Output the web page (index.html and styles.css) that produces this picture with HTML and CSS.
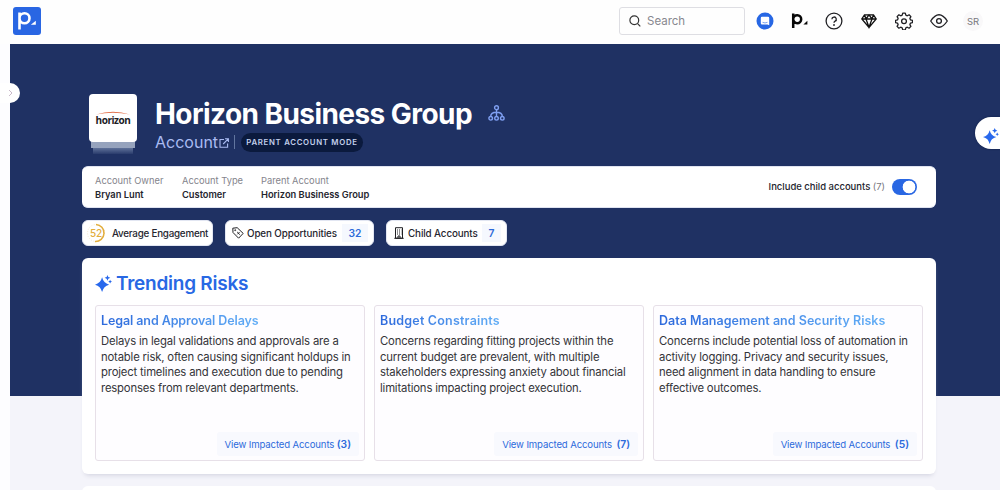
FILE: index.html
```html
<!DOCTYPE html>
<html lang="en">
<head>
<meta charset="utf-8">
<title>Horizon Business Group</title>
<link rel="stylesheet" href="styles.css">
</head>
<body>
<svg class="defs" width="0" height="0">
  <symbol id="sparkle" viewBox="0 0 18 18"><path d="M7.500 2.500 Q9 8.800 15 10.200 Q9 11.600 7.500 18 Q6 11.600 0 10.200 Q6 8.800 7.500 2.500Z M13.200 0l.9 2.100 2.100.9-2.100.9-.9 2.100-.9-2.100-2.100-.9 2.100-.9Z M16 5l.7 1.400 1.300.6-1.300.6-.7 1.400-.7-1.400-1.300-.6 1.300-.6Z"/></symbol>
</svg>
<header class="topbar">
  <div class="logo"><svg width="28" height="28" viewBox="0 0 28 28"><path class="p-white" d="M6.500 22.500V5.500M6.500 11.200a5 5 0 1 1 5 5a5 5 0 0 1-5-5"/><path fill="#fff" d="M17.800 17.800l5-4v4z"/></svg></div>
  <div class="tools">
    <div class="search"><svg width="12" height="12" viewBox="0 0 12 12"><circle cx="5.300" cy="5.300" r="4.400"/><path d="M8.600 8.600l2.700 2.700"/></svg><span>Search</span></div>
    <svg class="i-chat" width="18" height="18" viewBox="0 0 18 18"><circle cx="9" cy="9" r="8.500" fill="#2767e4"/><path fill="#fff" d="M6 4.700h6a1.200 1.200 0 0 1 1.200 1.200v7.300l-1.700-.7H6a1.200 1.200 0 0 1-1.200-1.200V5.900a1.200 1.200 0 0 1 1.200-1.200z"/><path d="M6.500 10.300q2.500 1.300 5 0" fill="none" stroke="#2767e4" stroke-width=".6"/></svg>
    <svg class="i-p" width="18" height="18" viewBox="0 0 18 18"><path fill="none" stroke="#080808" stroke-width="2.500" d="M2.200 16V1.500M2.200 7a4 4 0 1 1 4 4.200a4 4 0 0 1-4-4.200"/><path fill="#080808" d="M12.400 12.500l4-3.700v3.700z"/></svg>
    <svg class="line i-help" width="18" height="18" viewBox="0 0 18 18"><circle cx="9" cy="9" r="7.900"/><path d="M6.900 7.200a2.200 2.200 0 1 1 3.200 2c-.8.400-1.100.8-1.100 1.500"/><circle cx="9" cy="12.900" r=".35"/></svg>
    <svg class="i-gem" width="16" height="16" viewBox="0 0 16 16"><path d="M3.500 1.800h9L15.200 6 8 14.500.8 6zM1 6h14M3.500 1.800L5 6l3-4.200L11 6l1.500-4.200M5 6l3 8.300L11 6"/></svg>
    <svg class="line i-gear" width="18" height="18" viewBox="0 0 18 18"><path d="M7.700 1.200h2.600l.5 2 1.500.6 1.800-1 1.800 1.800-1 1.800.6 1.500 2 .5v2.200l-2 .5-.6 1.500 1 1.800-1.800 1.800-1.800-1-1.500.6-.5 2H7.700l-.5-2-1.500-.6-1.800 1-1.800-1.800 1-1.800-.6-1.500-2-.5V8.400l2-.5.6-1.500-1-1.800 1.800-1.800 1.800 1 1.500-.6z" stroke-linejoin="round"/><circle cx="9" cy="9.300" r="2.400"/></svg>
    <svg class="line i-eye" width="18" height="18" viewBox="0 0 18 18"><path d="M.7 9Q9-3.500 17.300 9Q9 21.500.7 9z" stroke-linejoin="round"/><circle cx="9" cy="9" r="2.400"/></svg>
    <span class="avatar">SR</span>
  </div>
</header>
<main class="stage">
  <button class="expander"><svg width="5" height="8" viewBox="0 0 5 8"><path d="M1 1l3 3-3 3"/></svg></button>
  <button class="assistant"><svg width="16" height="16"><use href="#sparkle"/></svg></button>
  <section class="identity">
    <div class="brand"><div class="brand-card"><svg class="swoosh" width="34" height="4" viewBox="0 0 36 4"><path d="M0 3.500Q18-2.300 36 3.500Q18 .2 0 3.500z"/></svg><span>horizon</span></div></div>
    <div class="heading">
      <div class="title-row"><h1>Horizon Business Group</h1><svg class="tree" width="17" height="17" viewBox="0 0 17 17"><circle cx="8.500" cy="2.700" r="1.900"/><circle cx="2.700" cy="13.300" r="1.800"/><circle cx="8.500" cy="13.300" r="1.800"/><circle cx="14.300" cy="13.300" r="1.800"/><path d="M8.500 4.700v7M2.700 11.500C2.700 8.500 4.500 7.300 8.500 7.300s5.800 1.200 5.800 4.200"/></svg></div>
      <div class="sub-row"><span class="kind">Account</span><svg class="external" width="10" height="10" viewBox="0 0 10 10"><path d="M5 1.500H1v7.700h7.600V5.500M6 .7h3.400v3.400M9.200.9L4.200 6"/></svg><i class="sep"></i><span class="mode">PARENT ACCOUNT MODE</span></div>
    </div>
  </section>
  <section class="facts">
    <dl class="owner"><dt>Account Owner</dt><dd>Bryan Lunt</dd></dl>
    <dl class="type"><dt>Account Type</dt><dd>Customer</dd></dl>
    <dl class="parent"><dt>Parent Account</dt><dd>Horizon Business Group</dd></dl>
    <div class="include"><span class="include-label">Include child accounts <em>(7)</em></span><span class="toggle"></span></div>
  </section>
  <nav class="chips">
    <div class="chip engagement"><span class="score">52<svg width="20" height="20" viewBox="0 0 20 20"><circle cx="10" cy="10" r="8.500" stroke="#f3ead2" stroke-width="1" stroke-dasharray="1 1.500"/><path d="M10 1.500a8.500 8.500 0 1 1-1 17" stroke="#e2ad3c" stroke-width="1.500"/></svg></span><span class="t-eng">Average Engagement</span></div>
    <div class="chip opportunities"><svg class="line" width="12" height="12" viewBox="0 0 12 12"><path d="M.8 1.200l4.400-.5 6 5.700-4.600 4.800L1 5.500z"/><circle cx="3.200" cy="3.200" r=".5"/><path d="M5.200 5l2.600 2.600M7.500 5.200L5.400 7.300"/></svg><span class="t-opp">Open Opportunities</span><b>32</b></div>
    <div class="chip children"><svg class="line" width="10" height="12" viewBox="0 0 10 12"><path d="M1.500.7h7v10.500h-7zM.3 11.300h9.400M4 11V9h2v2"/><path stroke-dasharray="1 1" d="M3 3h4.500M3 5h4.500M3 7h4.500"/></svg><span class="t-child">Child Accounts</span><b>7</b></div>
  </nav>
  <section class="risks">
    <h2><svg width="17" height="17"><use href="#sparkle"/></svg><span>Trending Risks</span></h2>
    <div class="cards">
      <article><h3 class="h-a">Legal and Approval Delays</h3><p>Delays in legal validations and approvals are a<br>notable risk, often causing significant holdups in<br>project timelines and execution due to pending<br>responses from relevant departments.</p><a>View Impacted Accounts <b>(3)</b></a></article>
      <article><h3 class="h-b">Budget Constraints</h3><p>Concerns regarding fitting projects within the<br>current budget are prevalent, with multiple<br>stakeholders expressing anxiety about financial<br>limitations impacting project execution.</p><a class="wide">View Impacted Accounts <b>(7)</b></a></article>
      <article><h3 class="h-c">Data Management and Security Risks</h3><p>Concerns include potential loss of automation in<br>activity logging. Privacy and security issues,<br>need alignment in data handling to ensure<br>effective outcomes.</p><a class="wide">View Impacted Accounts <b>(5)</b></a></article>
    </div>
  </section>
  <section class="next-panel"></section>
</main>
</body>
</html>
```

FILE: styles.css
```css
* { box-sizing: border-box; }
html, body { margin: 0; height: 490px; overflow: hidden; }
body { font-family: Inter, "Liberation Sans", sans-serif; background: #fdfdff; color: #25252e; white-space: nowrap; }
h1, h2, h3, p, dl, dd { margin: 0; }
svg { display: block; flex: none; }
button { border: 0; padding: 0; background: #fff; }
.defs { position: absolute; }
.line { fill: none; stroke: #202024; stroke-width: 1.3; }

.topbar { height: 44px; background: #fefefe; display: flex; justify-content: space-between; padding: 7px 17px 0 13px; }
.logo { width: 28px; height: 28px; border-radius: 3px; background: #2966e3; }
.p-white { fill: none; stroke: #fff; stroke-width: 2.6; }
.tools { display: flex; align-items: center; height: 28px; }
.search { width: 126px; height: 28px; border: 1px solid #dedee3; border-radius: 3px; display: flex; align-items: center; gap: 6px; padding-left: 9px; font-size: 11.5px; color: #88888f; margin-right: 11px; }
.search svg { fill: none; stroke: #333; stroke-width: 1.2; }
.i-chat { margin-right: 17px; }
.i-p { margin-right: 16px; }
.i-help { margin-right: 18px; }
.i-gem { margin-right: 18px; fill: none; stroke: #111; stroke-width: 1.3; }
.i-gear { margin-right: 17px; }
.i-eye { margin-right: 15px; }
.avatar { width: 20px; height: 20px; border-radius: 50%; background: #f9f8f9; font-size: 9.5px; line-height: 21px; text-align: center; color: #77777c; }

.stage { position: relative; margin-left: 10px; height: 446px; padding: 50px 64px 0 72px; background: linear-gradient(#1f3163 352px, #f4f4fa 352px); }
.expander { position: absolute; left: -10px; top: 39px; width: 20px; height: 20px; border-radius: 0 10px 10px 0; display: flex; align-items: center; padding-left: 8px; }
.expander path { fill: none; stroke: #c9b9c9; stroke-width: 1; }
.assistant { position: absolute; right: 0; top: 73px; width: 25px; height: 32px; border-radius: 16px 0 0 16px; padding: 7px 0 1px 8px; box-shadow: 0 0 2px #0d1d45; }
.assistant svg, .risks h2 svg { fill: #2868ec; }

.identity { display: flex; height: 72px; padding-left: 7px; }
.brand { width: 48px; height: 60px; margin-right: 18px; padding: 0 0 11px; background: linear-gradient(#96a3bd, #96a3bd) 2px 47px / 44px 7px no-repeat, linear-gradient(#5f7199, #2a3c6c) 4px 54px / 40px 6px no-repeat; }
.brand-card { height: 48px; border-radius: 4px; background: #fff; color: #202024; display: flex; flex-direction: column; align-items: center; padding-top: 17px; font: bold 10px/12px "Open Sans", sans-serif; letter-spacing: -.45px; }
.swoosh { fill: #e06b45; margin-bottom: -1px; }
.title-row { display: flex; align-items: center; height: 38px; }
h1 { font-size: 28px; line-height: 38px; padding-top: 1px; letter-spacing: -.56px; width: 333px; font-weight: 700; color: #fff; }
.tree { fill: none; stroke: #7f9ff1; stroke-width: 1.4; }
.sub-row { display: flex; align-items: center; height: 20px; }
.kind { width: 64px; font-size: 16px; color: #a9bbf2; }
.external { fill: none; stroke: #a9bbf2; stroke-width: 1.1; margin-top: 2px; }
.sep { width: 1px; height: 14px; background: #62769f; margin: 0 6px 0 5px; }
.mode { width: 122px; height: 19px; border-radius: 10px; background: #0b1a3d; color: #c3d0ec; font-size: 7.8px; line-height: 19px; font-weight: 600; text-align: center; letter-spacing: .7px; }

.facts { height: 42px; border-radius: 6px; background: #fff; display: flex; padding: 7px 19px 0 13px; font-size: 9.3px; line-height: 14px; border: 1px solid #dfe3f0; border-width: 1px 0; }
dt { color: #84848c; }
dd { font-weight: 600; }
.owner { width: 87px; } .type { width: 79px; }
.include { margin-left: auto; display: flex; align-items: center; height: 26px; font-weight: 500; font-size: 9.5px; }
.include em { font-style: normal; font-weight: 400; color: #777780; }
.include-label { margin-right: 7px; letter-spacing: -.02px; }
.toggle { width: 25px; height: 16px; border-radius: 8px; background: radial-gradient(circle at 17px 8px, #fff 6px, #2967e3 6.7px); }

.chips { display: flex; gap: 12px; padding: 12px 0; }
.chip { height: 26px; border-radius: 6px; background: #fff; display: flex; align-items: center; font-size: 9.8px; letter-spacing: -.1px; font-weight: 500; border: 1px solid #e2e6f2; }
.engagement { width: 131px; padding-left: 3px; }
.score { position: relative; width: 20px; line-height: 20px; margin-right: 6px; text-align: center; color: #e2ad3c; font-size: 10px; }
.score svg { position: absolute; left: 0; top: 0; fill: none; }
.opportunities { width: 149px; padding-left: 6px; }
.children { width: 121px; padding-left: 7px; }
.opportunities svg, .children svg { margin-right: 3px; stroke-width: 1; }
.children svg { margin-right: 4px; }
.t-eng { letter-spacing: -.22px; }
.chip b { margin-left: auto; margin-right: 5px; width: 26px; line-height: 18px; text-align: center; background: #f5f8fe; color: #2d6bd9; font-size: 10.3px; font-weight: 600; }
.children b { width: 19px; }

.risks { height: 216px; border-radius: 6px; background: #fff; padding: 12px 13px 0; box-shadow: 0 4px 5px -3px #cfd0dd; }
.risks h2 { display: flex; align-items: center; gap: 4px; height: 26px; margin-bottom: 9px; font-size: 19px; font-weight: 600; color: #2868e4; letter-spacing: -.25px; }
.cards { display: grid; grid-template-columns: repeat(3, 1fr); gap: 9px; }
.cards article { height: 156px; border: 1px solid #e7e0e8; border-radius: 3px; padding: 6px 5px 4px 5px; display: flex; flex-direction: column; align-items: flex-start; background: #fefdff; }
h3 { font-size: 12.5px; line-height: 17px; font-weight: 600; color: transparent; background: linear-gradient(90deg, #2d69dc, #62aef6); background-clip: text; -webkit-background-clip: text; margin-bottom: 5px; }
.h-a { letter-spacing: -.1px; }
.h-b { letter-spacing: .2px; }
.h-c { letter-spacing: .02px; }
.cards p { font-size: 11.3px; line-height: 15.7px; color: #343439; letter-spacing: -.17px; }
.cards a { margin-top: auto; align-self: flex-end; height: 24px; line-height: 24px; padding: 0 8px; background: #f8f9fe; color: #2d6bdc; font-size: 9.6px; letter-spacing: -.14px; border-radius: 3px; }
.cards a b { font-weight: 600; font-size: 10.3px; letter-spacing: 0; }
.cards .wide b { margin-left: 2px; }
.next-panel { height: 20px; margin-top: 12px; background: #fff; border-radius: 6px; }
```
